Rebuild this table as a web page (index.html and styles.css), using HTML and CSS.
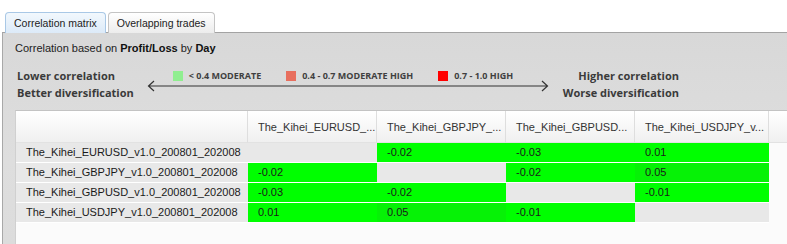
FILE: index.html
```html
<!DOCTYPE html>
<html>
<head>
<meta charset="utf-8">
<link rel="stylesheet" href="styles.css">
</head>
<body>
<div class="tabs">
  <div class="tab active">Correlation matrix</div>
  <div class="tab">Overlapping trades</div>
</div>
<div class="panel">
  <div class="caption">Correlation based on <b>Profit/Loss</b> by <b>Day</b></div>
  <div class="legend">
    <div class="side left">Lower correlation<br>Better diversification</div>
    <div class="middle">
      <div class="items">
        <span class="item"><i class="sw sw-low"></i>&lt; 0.4 MODERATE</span>
        <span class="item"><i class="sw sw-mid"></i>0.4 - 0.7 MODERATE HIGH</span>
        <span class="item"><i class="sw sw-high"></i>0.7 - 1.0 HIGH</span>
      </div>
      <svg class="arrow" width="402" height="12" viewBox="0 0 402 12">
        <path d="M1 6 H401 M7 1 L1.5 6 L7 11 M395 1 L400.5 6 L395 11" fill="none" stroke="#333" stroke-width="1.2"/>
      </svg>
    </div>
    <div class="side right">Higher correlation<br>Worse diversification</div>
  </div>
  <div class="table">
    <div class="matrix">
      <div class="hd corner"></div>
      <div class="hd">The_Kihei_EURUSD_...</div>
      <div class="hd">The_Kihei_GBPJPY_...</div>
      <div class="hd">The_Kihei_GBPUSD...</div>
      <div class="hd">The_Kihei_USDJPY_v...</div>
      <div class="hd fill"></div>

      <div class="rh">The_Kihei_EURUSD_v1.0_200801_202008</div>
      <div class="c e"></div>
      <div class="c g">-0.02</div>
      <div class="c g">-0.03</div>
      <div class="c g">0.01</div>
      <div class="c x"></div>

      <div class="rh">The_Kihei_GBPJPY_v1.0_200801_202008</div>
      <div class="c g">-0.02</div>
      <div class="c e"></div>
      <div class="c g">-0.02</div>
      <div class="c g2">0.05</div>
      <div class="c x"></div>

      <div class="rh">The_Kihei_GBPUSD_v1.0_200801_202008</div>
      <div class="c g">-0.03</div>
      <div class="c g">-0.02</div>
      <div class="c e"></div>
      <div class="c g">-0.01</div>
      <div class="c x"></div>

      <div class="rh">The_Kihei_USDJPY_v1.0_200801_202008</div>
      <div class="c g">0.01</div>
      <div class="c g2">0.05</div>
      <div class="c g">-0.01</div>
      <div class="c e"></div>
      <div class="c x"></div>
    </div>
  </div>
</div>
</body>
</html>
```
FILE: styles.css
```css
html, body {
  margin: 0;
  padding: 0;
  background: #ffffff;
  overflow: hidden;
}
body {
  font-family: "Liberation Sans", Arial, sans-serif;
  color: #222;
  width: 787px;
  height: 244px;
}
.tabs {
  display: flex;
  gap: 2px;
  padding: 12px 0 0 5px;
  height: 20px;
  position: relative;
  z-index: 1;
}
.tab {
  box-sizing: border-box;
  height: 21px;
  padding: 4px 8px 0 8px;
  font-size: 10.5px;
  color: #222;
  border: 1px solid #c4c4c4;
  border-bottom: none;
  border-radius: 4px 4px 0 0;
  background: linear-gradient(#ffffff, #ececec);
}
.tab.active {
  border-color: #a9c8e6;
  background: linear-gradient(#f2f8fd, #dceaf8);
}
.panel {
  margin-left: 2px;
  height: 212px;
  border-top: 1px solid #a3a3a3;
  border-left: 1px solid #a8a8a8;
  background: linear-gradient(#d8d8d8, #dedede 60%, #dcdcdc);
  padding: 9px 0 0 12px;
  box-sizing: border-box;
  overflow: hidden;
}
.caption {
  font-size: 11px;
  color: #222;
  line-height: 13px;
}
.caption b {
  color: #111;
}
.legend {
  display: flex;
  width: 662px;
  margin-top: 12px;
  margin-left: 2px;
  font-family: "Open Sans", sans-serif;
}
.side {
  font-weight: bold;
  font-size: 11px;
  line-height: 17px;
  color: #3a3a3a;
  white-space: nowrap;
}
.side.right {
  text-align: right;
}
.middle {
  flex: 1;
  display: flex;
  flex-direction: column;
  padding-top: 3px;
}
.items {
  display: flex;
  gap: 25px;
  margin-left: 39px;
  font-size: 9px;
  font-weight: bold;
  color: #404040;
  line-height: 11px;
  height: 11px;
}
.item {
  display: flex;
  align-items: center;
  gap: 6px;
}
.sw {
  display: block;
  width: 10px;
  height: 10px;
}
.sw-low { background: #90ee90; }
.sw-mid { background: #e86f5e; }
.sw-high { background: #ff0000; }
.arrow {
  display: block;
  margin-top: -1px;
  margin-left: 13px;
}
.table {
  margin-top: 9px;
  height: 140px;
  border-top: 1px solid #c3c3c3;
  border-left: 1px solid #d0d0d0;
  background: #fbfbfb;
}
.matrix {
  display: grid;
  grid-template-columns: 232px 129px 129px 129px 134px 1fr;
}
.hd {
  box-sizing: border-box;
  height: 32px;
  padding: 10px 0 0 10px;
  font-size: 11px;
  color: #333;
  background: linear-gradient(#ffffff, #f0f0f0);
  border-right: 1px solid #dedede;
  border-bottom: 1px solid #e2e2e2;
  white-space: nowrap;
  overflow: hidden;
}
.hd.fill {
  border-right: none;
}
.c, .rh {
  box-sizing: border-box;
  height: 20px;
  border-bottom: 1px solid #ffffff;
  font-size: 11px;
  line-height: 19px;
  padding-left: 10px;
  color: #1a1a1a;
  white-space: nowrap;
}
.rh {
  background: #e8e8e8;
}
.e { background: #e8e8e8; }
.g { background: #00ff00; }
.g2 { background: #06f206; }
.x { background: transparent; border-bottom: none; }
```
